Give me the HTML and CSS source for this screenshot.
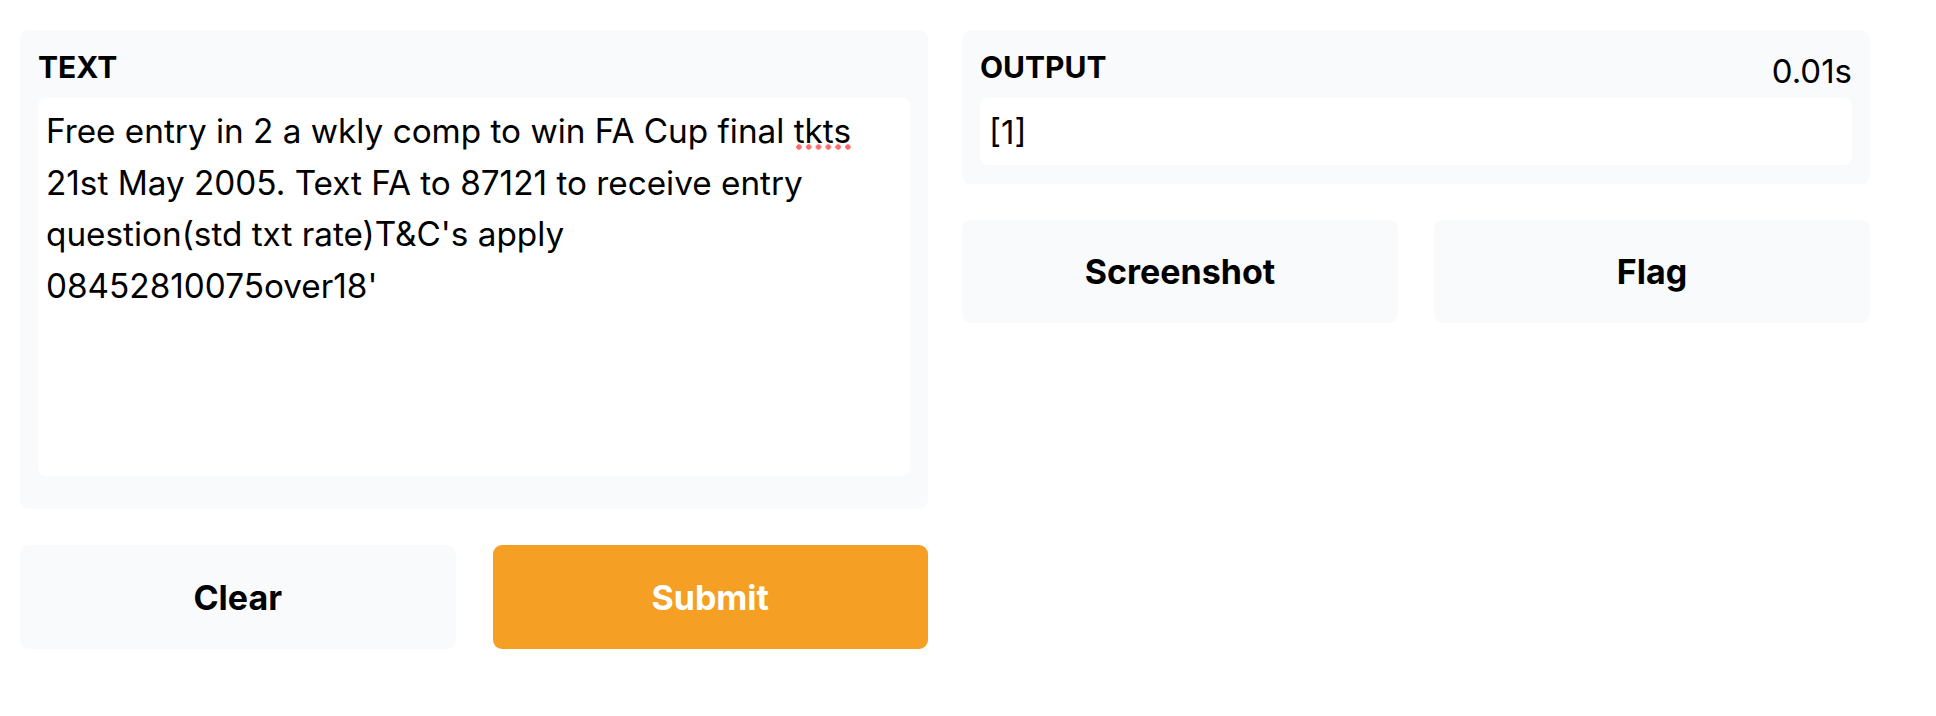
FILE: index.html
```html
<!DOCTYPE html>
<html lang="en">
<head>
<meta charset="utf-8">
<title>Interface</title>
<link rel="stylesheet" href="styles.css">
</head>
<body>
<div class="app">
  <div class="col">
    <div class="panel panel-text">
      <div class="head"><span class="label">TEXT</span></div>
      <div class="textbox">Free entry in 2 a wkly comp to win FA Cup final <span class="spell">tkts</span><br>21st May 2005. Text FA to 87121 to receive entry<br>question(std txt rate)T&amp;C's apply<br>08452810075over18'</div>
    </div>
    <div class="btn-row">
      <button class="btn">Clear</button>
      <button class="btn btn-primary">Submit</button>
    </div>
  </div>
  <div class="col">
    <div class="panel panel-out">
      <div class="head"><span class="label">OUTPUT</span><span class="timer">0.01s</span></div>
      <div class="outbox">[1]</div>
    </div>
    <div class="btn-row btn-row-right">
      <button class="btn">Screenshot</button>
      <button class="btn">Flag</button>
    </div>
  </div>
</div>
</body>
</html>
```
FILE: styles.css
```css
* { box-sizing: border-box; }
html, body { margin: 0; background: #ffffff; }
body {
  font-family: Inter, "Noto Sans", "Liberation Sans", sans-serif;
  color: #000;
  padding: 30px 66px 0 20px;
}
.app {
  display: grid;
  grid-template-columns: 908px 908px;
  column-gap: 34px;
  align-items: start;
}
.col {
  display: flex;
  flex-direction: column;
  gap: 36px;
}
.panel {
  background: #f9fafb;
  border-radius: 9px;
  padding: 18px;
}
.panel-text { height: 479px; }
.panel-out { height: 154px; }
.head {
  height: 50px;
  display: flex;
  justify-content: space-between;
  align-items: flex-start;
}
.label {
  font-weight: 700;
  font-size: 30px;
  line-height: 36px;
  margin-top: 1px;
}
.timer {
  font-size: 33px;
  line-height: 36px;
  margin-top: 5px;
}
.textbox {
  background: #fff;
  border-radius: 8px;
  height: 378px;
  padding: 8px 8px;
  font-size: 33.3px;
  line-height: 51.7px;
}
.spell {
  background-image: radial-gradient(circle at 50% 50%, rgba(255, 90, 90, 0.9) 2.4px, rgba(255, 90, 90, 0) 3px);
  background-size: 9.8px 8px;
  background-repeat: repeat-x;
  background-position: 0 100%;
}
.outbox {
  background: #fff;
  border-radius: 8px;
  height: 67px;
  padding: 0 9px;
  display: flex;
  align-items: center;
  font-size: 33px;
  line-height: 38px;
}
.btn-row {
  display: grid;
  grid-template-columns: 1fr 1fr;
  column-gap: 37px;
  height: 104px;
}
.btn-row-right { column-gap: 36px; height: 103px; }
.btn {
  border: none;
  border-radius: 9px;
  background: #f9fafb;
  font-family: Inter, "Noto Sans", "Liberation Sans", sans-serif;
  font-weight: 700;
  font-size: 34px;
  color: #000;
  padding: 0;
  cursor: pointer;
}
.btn-primary {
  background: #f5a024;
  color: #fff;
}
```
